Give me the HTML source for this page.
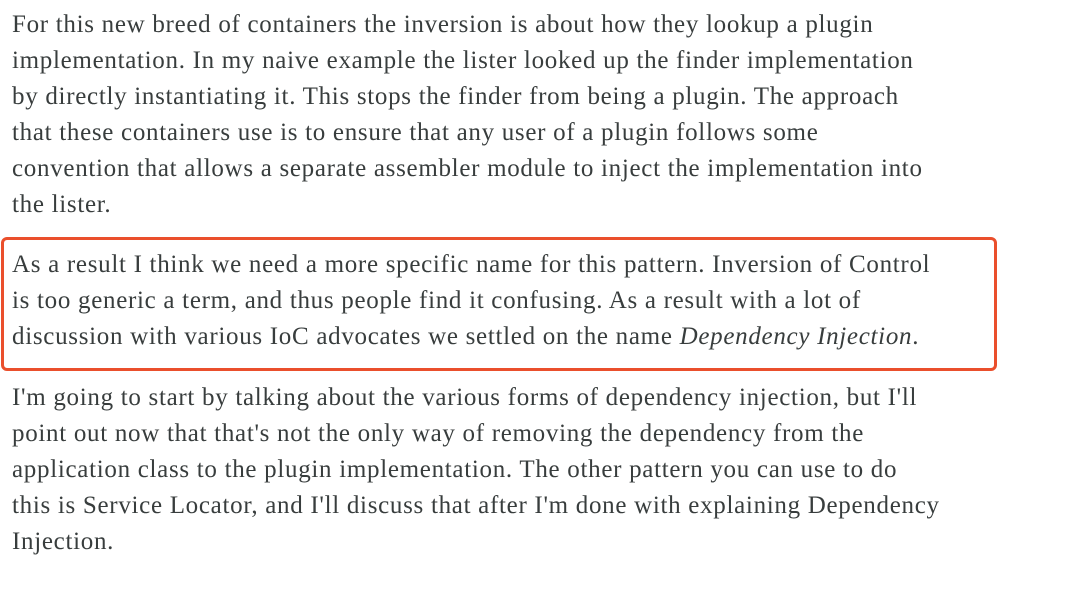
<!DOCTYPE html>
<html><head><meta charset="utf-8"><style>
html,body{margin:0;padding:0;background:#fff;}
body{width:1080px;height:593px;position:relative;overflow:hidden;font-family:"Liberation Serif",serif;color:#383d3d;font-size:25px;}
.l{position:absolute;left:12px;white-space:nowrap;line-height:36px;height:36px;letter-spacing:0.7px;}
.box{position:absolute;left:1px;top:237px;width:990px;height:128px;border:3px solid #ea4f2c;border-radius:6px;}
</style></head><body>
<div class="l" style="top:7px">For this new breed of containers the inversion is about how they lookup a plugin</div>
<div class="l" style="top:43px">implementation. In my naive example the lister looked up the finder implementation</div>
<div class="l" style="top:79px">by directly instantiating it. This stops the finder from being a plugin. The approach</div>
<div class="l" style="top:115px">that these containers use is to ensure that any user of a plugin follows some</div>
<div class="l" style="top:151px">convention that allows a separate assembler module to inject the implementation into</div>
<div class="l" style="top:187px">the lister.</div>
<div class="box"></div>
<div class="l" style="top:247px">As a result I think we need a more specific name for this pattern. Inversion of Control</div>
<div class="l" style="top:283px">is too generic a term, and thus people find it confusing. As a result with a lot of</div>
<div class="l" style="top:319px">discussion with various IoC advocates we settled on the name <i>Dependency Injection</i>.</div>
<div class="l" style="top:380px">I'm going to start by talking about the various forms of dependency injection, but I'll</div>
<div class="l" style="top:416px">point out now that that's not the only way of removing the dependency from the</div>
<div class="l" style="top:452px">application class to the plugin implementation. The other pattern you can use to do</div>
<div class="l" style="top:488px">this is Service Locator, and I'll discuss that after I'm done with explaining Dependency</div>
<div class="l" style="top:524px">Injection.</div>
</body></html>
